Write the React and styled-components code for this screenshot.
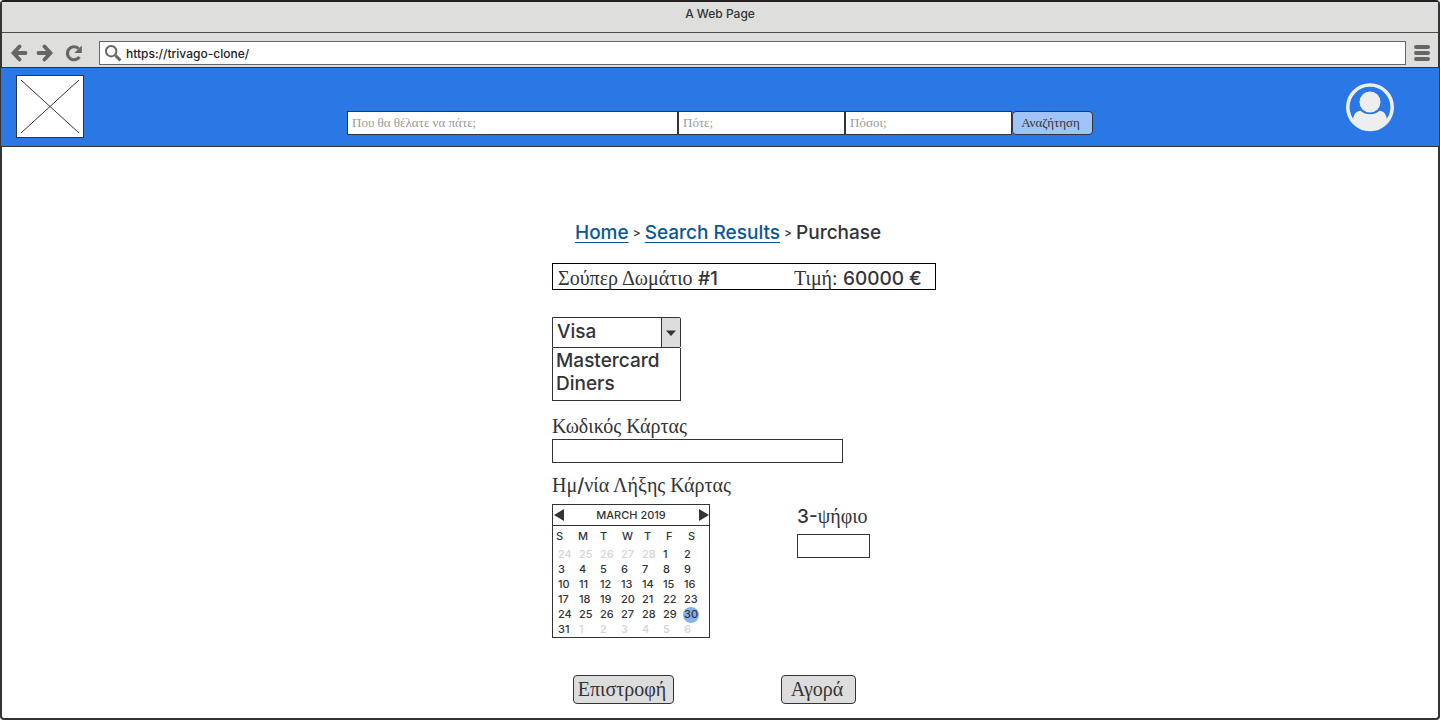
import React, { useState } from "react";
import styled, { createGlobalStyle } from "styled-components";

const ink = "#333436";
const sans = `Inter, "Liberation Sans", sans-serif`;
const serif = `"Liberation Serif", serif`;

const GlobalStyle = createGlobalStyle`
  *, *::before, *::after { box-sizing: border-box; }
  body { margin: 0; background: #fff; color: ${ink}; font-family: ${sans}; font-weight: 500; }
  button, input, select { font: inherit; color: inherit; }
`;

const Frame = styled.div`
  min-height: 100vh;
  border: 2px solid ${ink};
  border-top-color: #231f20;
  border-radius: 4px;
`;

const TitleBar = styled.div`
  height: 31px;
  border-bottom: 1px solid #4a4a4a;
  background: #dededc;
  text-align: center;
  font-size: 12px;
  line-height: 24px;
`;

const Toolbar = styled.div`
  display: flex;
  align-items: center;
  height: 34px;
  padding: 6px 8px 0;
  background: #dededc;
`;

const ToolButton = styled.button`
  display: flex;
  padding: 0;
  border: 0;
  background: none;
  color: #666;
  margin-right: ${(p) => p.$gap || 0}px;
`;

const Address = styled.label`
  display: flex;
  flex: 1;
  align-items: center;
  gap: 4px;
  height: 24px;
  margin-right: 8px;
  padding-left: 5px;
  border: 1px solid #666;
  background: #fff;
  color: #666;
`;

const AddressInput = styled.input`
  flex: 1;
  min-width: 0;
  padding: 0;
  border: 0;
  outline: 0;
  background: none;
  color: #222;
  font-size: 12px;
`;

const Header = styled.header`
  display: grid;
  grid-template-columns: 1fr minmax(0, 746px) 1fr;
  height: 80px;
  margin: 0 -2px;
  border: 1px solid ${ink};
  background: #2a77e6;
`;

const Logo = styled.svg`
  margin: 7px 0 0 15px;
`;

const Avatar = styled.button`
  justify-self: end;
  align-self: start;
  display: flex;
  margin: 15px 45px 0 0;
  padding: 0;
  border: 0;
  background: none;
`;

const Search = styled.form`
  display: grid;
  grid-template-columns: 331fr 167fr 167fr 81fr;
  height: 24px;
  margin-top: 43px;
  font-family: ${serif};
  font-size: 13px;
  font-weight: 400;
`;

const SearchInput = styled.input`
  min-width: 0;
  padding: 0 4px;
  border: 1px solid ${ink};
  border-radius: 0;
  background: #fff;
  &::placeholder { color: #999; opacity: 1; }
`;

const SearchButton = styled.button`
  padding: 0 4px 0 0;
  border: 1px solid ${ink};
  border-radius: 4px;
  background: #a0c3f8;
`;

const Main = styled.main`
  display: flex;
  justify-content: center;
  padding: 74px 0 14px 48px;
`;

const Column = styled.form`
  width: 384px;
  font-size: 20px;
  line-height: 24px;
`;

const Crumbs = styled.nav`
  display: flex;
  align-items: center;
  gap: 4px;
  padding-left: 23px;
  font-size: 19px;
  white-space: nowrap;
`;

const CrumbLink = styled.a`
  color: #0b5796;
  text-decoration: underline;
  text-decoration-thickness: 1px;
  text-underline-offset: 3px;
`;

const Separator = styled.span`
  font-size: 12px;
`;

const Greek = styled.span`
  font-family: ${serif};
  font-size: 20px;
  font-weight: 400;
`;

const Product = styled.section`
  display: grid;
  grid-template-columns: 236px 1fr;
  height: 27px;
  margin-top: 18px;
  padding: 2px 0 0 5px;
  border: 1px solid #000;
  white-space: nowrap;
`;

const CardPicker = styled.div`
  width: 129px;
  margin-top: 27px;
  font-size: 19px;
`;

const SelectBox = styled.div`
  display: grid;
  grid-template-columns: 1fr 19px;
  height: 31px;
  border: 1px solid ${ink};
  border-radius: 0 2px 2px 0;
`;

const Select = styled.select`
  grid-area: 1 / 1 / 2 / 3;
  appearance: none;
  padding: 0 20px 2px 4px;
  border: 0;
  background: none;
`;

const SelectArrow = styled.span`
  grid-area: 1 / 2;
  display: flex;
  align-items: center;
  justify-content: center;
  border-left: 1px solid ${ink};
  background: #ddd;
  pointer-events: none;
`;

const Options = styled.ul`
  height: 53px;
  margin: 0;
  padding: 1px 3px 0;
  border: 1px solid ${ink};
  border-top: 0;
  list-style: none;
  line-height: 23px;
`;

const Label = styled.label`
  display: block;
  margin-top: ${(p) => p.$top || 0}px;
  font-family: ${serif};
  font-weight: 400;
`;

const Latin = styled.span`
  font-family: ${sans};
  font-size: 19px;
  font-weight: 500;
  line-height: 1;
`;

const TextInput = styled.input`
  display: block;
  width: ${(p) => p.$width}px;
  height: 24px;
  margin-top: ${(p) => p.$top}px;
  padding: 0 4px;
  border: 1px solid ${ink};
  border-radius: 0;
  font-size: 14px;
`;

const Expiry = styled.div`
  display: flex;
  align-items: flex-start;
  gap: 87px;
  margin-top: 7px;
`;

const Calendar = styled.section`
  width: 158px;
  border: 1px solid ${ink};
  font-size: 11px;
  line-height: 15px;
`;

const Month = styled.div`
  display: flex;
  align-items: center;
  justify-content: space-between;
  height: 21px;
  border-bottom: 1px solid ${ink};
`;

const MonthButton = styled.button`
  display: flex;
  padding: 0 0 0 1px;
  border: 0;
  background: none;
`;

const Days = styled.table`
  display: block;
`;

const DayGroup = styled.tbody`
  display: block;
`;

const Week = styled.tr`
  display: grid;
  grid-template-columns: repeat(7, ${(p) => (p.$head ? 22 : 21)}px);
  padding-left: ${(p) => (p.$head ? 3 : 5)}px;
  line-height: ${(p) => (p.$head ? 21 : 15)}px;
`;

const Weekday = styled.th`
  padding: 0;
  text-align: left;
  font-weight: 500;
`;

const Day = styled.td`
  padding: 0;
  color: ${(p) => (p.$muted ? "#d5d5d5" : ink)};
`;

const Chosen = styled.span`
  display: block;
  width: 16px;
  height: 16px;
  margin: 0 0 -1px -1px;
  border-radius: 50%;
  background: #84b0ee;
  text-align: center;
`;

const Actions = styled.div`
  display: flex;
  gap: 107px;
  margin-top: 37px;
  padding-left: 21px;
`;

const ActionButton = styled.button`
  width: ${(p) => p.$width}px;
  height: 29px;
  padding: 0 3px 2px 0;
  border: 1px solid ${ink};
  border-radius: 4px;
  background: #ddd;
  font-family: ${serif};
  font-weight: 400;
`;

const weekdays = ["S", "M", "T", "W", "T", "F", "S"];
const weeks = [
  [24, 25, 26, 27, 28, 1, 2],
  [3, 4, 5, 6, 7, 8, 9],
  [10, 11, 12, 13, 14, 15, 16],
  [17, 18, 19, 20, 21, 22, 23],
  [24, 25, 26, 27, 28, 29, 30],
  [31, 1, 2, 3, 4, 5, 6],
];
const outside = (w, d) => (w === 0 && d > 20) || (w === 5 && d < 10);

const BackArrow = ({ flip }) => (
  <svg width="18" height="18" viewBox="0 0 18 18" aria-hidden="true">
    <path
      d="M9.500 2.500 3.500 9l6 6.500M4 9h11.500"
      transform={flip ? "matrix(-1 0 0 1 18 0)" : undefined}
      fill="none"
      stroke="currentColor"
      strokeWidth="3.8"
      strokeLinecap="round"
      strokeLinejoin="miter"
    />
  </svg>
);

export default function App() {
  const [card, setCard] = useState("Visa");
  const stop = (e) => e.preventDefault();
  return (
    <>
      <GlobalStyle />
      <Frame>
        <TitleBar>A Web Page</TitleBar>
        <Toolbar>
          <ToolButton aria-label="Back" $gap={8}><BackArrow /></ToolButton>
          <ToolButton aria-label="Forward" $gap={11}><BackArrow flip /></ToolButton>
          <ToolButton aria-label="Reload" $gap={16}>
            <svg width="18" height="18" viewBox="0 0 18 18" aria-hidden="true">
              <path d="M14.400 12.800A6.500 6.500 0 1 1 13.500 4.600" fill="none" stroke="currentColor" strokeWidth="3.2" />
              <path d="M16.800 1.500V9H9.300Z" fill="currentColor" />
            </svg>
          </ToolButton>
          <Address>
            <svg width="17" height="17" viewBox="0 0 17 17" fill="none" stroke="currentColor" aria-hidden="true">
              <circle cx="6.2" cy="6.2" r="5.200" strokeWidth="2" />
              <path d="m10.500 10.500 5 5" strokeWidth="3" />
            </svg>
            <AddressInput aria-label="Address" defaultValue="https://trivago-clone/" />
          </Address>
          <ToolButton aria-label="Menu">
            <svg width="16" height="16" viewBox="0 0 16 16" fill="currentColor" aria-hidden="true">
              <rect width="16" height="4" rx="2" />
              <rect y="6" width="16" height="4" rx="2" />
              <rect y="12" width="16" height="4" rx="2" />
            </svg>
          </ToolButton>
        </Toolbar>
        <Header>
          <Logo width="68" height="63" viewBox="0 0 68 63" role="img" aria-label="Logo">
            <rect x=".5" y=".5" width="67" height="62" fill="#fff" stroke={ink} />
            <path d="m5 5 58 53M63 5 5 58" stroke={ink} />
          </Logo>
          <Search onSubmit={stop}>
            <SearchInput aria-label="Που" placeholder="Που θα θέλατε να πάτε;" />
            <SearchInput aria-label="Πότε" placeholder="Πότε;" />
            <SearchInput aria-label="Πόσοι" placeholder="Πόσοι;" />
            <SearchButton>Αναζήτηση</SearchButton>
          </Search>
          <Avatar aria-label="Account">
            <svg width="48" height="49" viewBox="0 0 48 49" aria-hidden="true">
              <circle cx="24" cy="24.2" r="22.200" fill="none" stroke="#eee" strokeWidth="3.6" />
              <circle cx="24" cy="19" r="10.500" fill="#eee" />
              <path d="M7 36.500C8 31 10 28 14.500 27.800c5 4.700 14 4.700 19 0 4.500.2 6.500 3.200 7.500 8.700-4 7-10 10.500-17 10.500S11 43.500 7 36.500Z" fill="#eee" />
            </svg>
          </Avatar>
        </Header>
        <Main>
          <Column onSubmit={stop}>
            <Crumbs aria-label="Breadcrumb">
              <CrumbLink href="#home">Home</CrumbLink>
              <Separator>&gt;</Separator>
              <CrumbLink href="#results">Search Results</CrumbLink>
              <Separator>&gt;</Separator>
              <span>Purchase</span>
            </Crumbs>
            <Product>
              <span><Greek>Σούπερ Δωμάτιο</Greek> <Latin>#1</Latin></span>
              <span><Greek>Τιμή:</Greek> <Latin>60000 €</Latin></span>
            </Product>
            <CardPicker>
              <SelectBox>
                <Select aria-label="Card" value={card} onChange={(e) => setCard(e.target.value)}>
                  <option>Visa</option>
                  <option>Mastercard</option>
                  <option>Diners</option>
                </Select>
                <SelectArrow>
                  <svg width="10" height="6" viewBox="0 0 10 6" aria-hidden="true">
                    <path d="M0 .5h10L5 6Z" fill={ink} />
                  </svg>
                </SelectArrow>
              </SelectBox>
              <Options>
                <li onClick={() => setCard("Mastercard")}>Mastercard</li>
                <li onClick={() => setCard("Diners")}>Diners</li>
              </Options>
            </CardPicker>
            <Label htmlFor="number" $top={13}>Κωδικός Κάρτας</Label>
            <TextInput id="number" $width={291} $top={1} />
            <Label as="div" $top={10}>Ημ<Latin>/</Latin>νία Λήξης Κάρτας</Label>
            <Expiry>
              <Calendar aria-label="Ημ/νία Λήξης Κάρτας">
                <Month>
                  <MonthButton type="button" aria-label="Previous month">
                    <svg width="10" height="12" viewBox="0 0 10 12"><path d="M10 0v12L0 6Z" fill={ink} /></svg>
                  </MonthButton>
                  <span>MARCH 2019</span>
                  <MonthButton type="button" aria-label="Next month">
                    <svg width="10" height="12" viewBox="0 0 10 12"><path d="M0 0v12l10-6Z" fill={ink} /></svg>
                  </MonthButton>
                </Month>
                <Days>
                  <DayGroup as="thead">
                    <Week $head>
                      {weekdays.map((d, i) => <Weekday key={i} scope="col">{d}</Weekday>)}
                    </Week>
                  </DayGroup>
                  <DayGroup>
                    {weeks.map((week, w) => (
                      <Week key={w}>
                        {week.map((d) => (
                          <Day key={d} $muted={outside(w, d)}>{d === 30 ? <Chosen>{d}</Chosen> : d}</Day>
                        ))}
                      </Week>
                    ))}
                  </DayGroup>
                </Days>
              </Calendar>
              <div>
                <Label htmlFor="cvv"><Latin>3-</Latin>ψήφιο</Label>
                <TextInput id="cvv" $width={73} $top={6} />
              </div>
            </Expiry>
            <Actions>
              <ActionButton type="button" $width={101}>Επιστροφή</ActionButton>
              <ActionButton $width={75}>Αγορά</ActionButton>
            </Actions>
          </Column>
        </Main>
      </Frame>
    </>
  );
}
